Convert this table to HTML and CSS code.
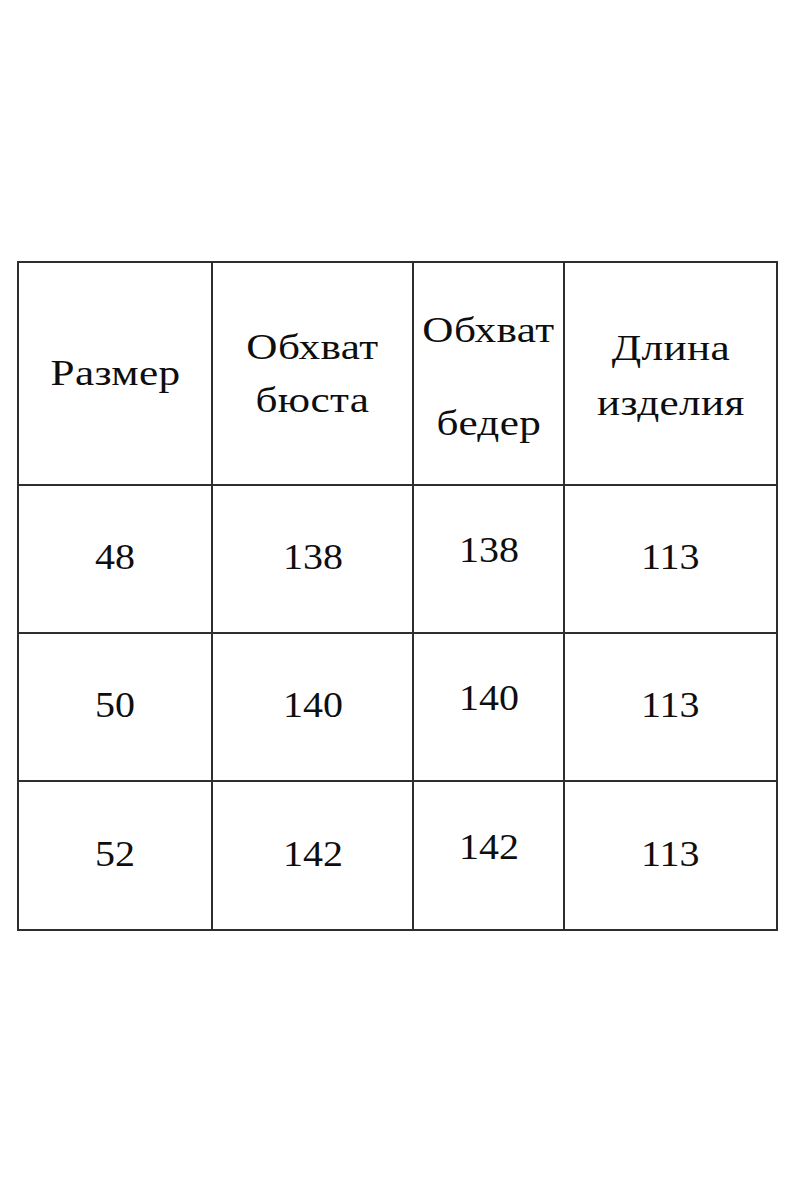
FILE: index.html
```html
<!DOCTYPE html>
<html lang="ru">
<head>
<meta charset="utf-8">
<title>Размеры</title>
<link rel="stylesheet" href="styles.css">
</head>
<body>
<div class="page">
  <div class="table">
    <div class="cell head"><span class="t">Размер</span></div>
    <div class="cell head"><span class="t">Обхват<br>бюста</span></div>
    <div class="cell head hips-head"><span class="t">Обхват</span><span class="t">бедер</span></div>
    <div class="cell head length-head"><span class="t">Длина<br>изделия</span></div>

    <div class="cell"><span class="t">48</span></div>
    <div class="cell"><span class="t">138</span></div>
    <div class="cell raised"><span class="t">138</span></div>
    <div class="cell"><span class="t">113</span></div>

    <div class="cell"><span class="t">50</span></div>
    <div class="cell"><span class="t">140</span></div>
    <div class="cell raised"><span class="t">140</span></div>
    <div class="cell"><span class="t">113</span></div>

    <div class="cell"><span class="t">52</span></div>
    <div class="cell"><span class="t">142</span></div>
    <div class="cell raised"><span class="t">142</span></div>
    <div class="cell"><span class="t">113</span></div>
  </div>
</div>
</body>
</html>
```

FILE: styles.css
```css
html, body {
  margin: 0;
  padding: 0;
  background: #ffffff;
}

.page {
  padding: 261px 0 0 17px;
  font-family: "Liberation Serif", "Times New Roman", serif;
  color: #0e0e0e;
}

.table {
  display: grid;
  grid-template-columns: 192px 199px 149px 211px;
  grid-template-rows: 221px 146px 146px 147px;
  gap: 2px;
  padding: 2px;
  width: max-content;
  background: #2e2e2e;
}

.cell {
  background: #ffffff;
  display: flex;
  align-items: center;
  justify-content: center;
  text-align: center;
  font-size: 36px;
  line-height: 53px;
  padding-bottom: 3px;
}

.t {
  display: inline-block;
  transform: scaleX(1.11);
}

.head {
  padding-bottom: 0;
}

.head .t {
  transform: scaleX(1.2);
  letter-spacing: 0.3px;
  padding-left: 0.3px;
}

.length-head .t {
  line-height: 55px;
  margin-top: 5px;
}

.hips-head {
  flex-direction: column;
  padding-top: 6px;
}

.hips-head .t {
  line-height: 52px;
}

.hips-head .t + .t {
  margin-top: 41px;
}

.raised {
  padding-bottom: 17px;
}
```
